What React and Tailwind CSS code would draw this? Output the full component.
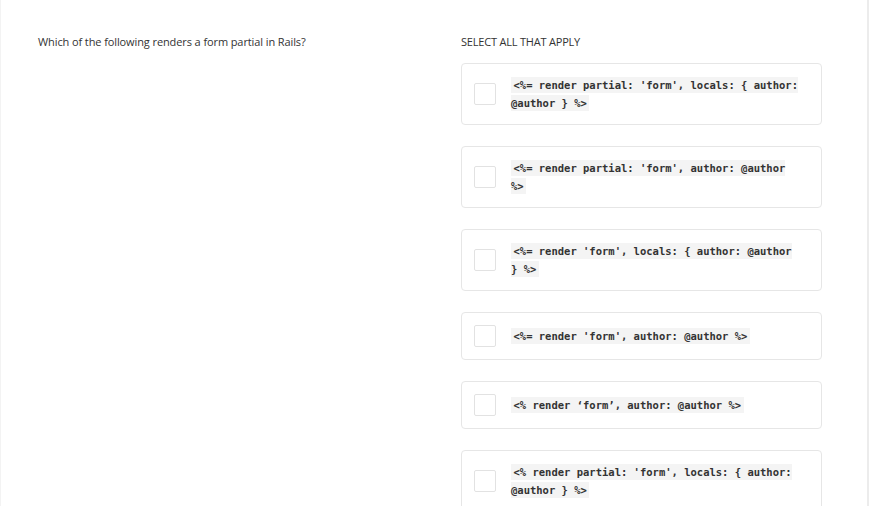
import React from 'react'

const options = [
  "<%= render partial: 'form', locals: { author: @author } %>",
  "<%= render partial: 'form', author: @author %>",
  "<%= render 'form', locals: { author: @author } %>",
  "<%= render 'form', author: @author %>",
  "<% render \u2018form\u2019, author: @author %>",
  "<% render partial: 'form', locals: { author: @author } %>",
]

const mono = { fontFamily: '"DejaVu Sans Mono", monospace' }

function Option({ code }) {
  return (
    <label className="flex items-center gap-[15px] rounded-[4px] border border-[#e6e6e6] bg-white px-[12px] py-[12px]">
      <span className="h-[22px] w-[22px] shrink-0 rounded-[2px] border border-[#e2e2e2] bg-white" />
      <span className="mr-[10px] flex-1 text-[10.5px] leading-[18px] text-[#333]" style={mono}>
        <code className="bg-[#f4f4f4] px-[2.5px] py-[2px] text-[10.5px] font-semibold" style={mono}>{code}</code>
      </span>
    </label>
  )
}

export default function App() {
  return (
    <div className="flex h-[506px] w-[869px] overflow-hidden border-l border-r-2 border-l-[#f3f3f3] border-r-[#ececec] bg-white" style={{ fontFamily: '"Open Sans", sans-serif' }}>
      <div className="flex-1 pl-[37px] pt-[34px]">
        <p className="text-[11px] leading-[15px] tracking-[-0.1px] text-[#333]">
          Which of the following renders a form partial in Rails?
        </p>
      </div>
      <div className="mr-[45px] w-[361px] pt-[34px]">
        <p className="mb-[14px] text-[11px] leading-[15px] tracking-[-0.2px] text-[#333] uppercase">
          Select all that apply
        </p>
        <div className="flex flex-col gap-[21px]">
          {options.map((c, i) => (
            <Option key={i} code={c} />
          ))}
        </div>
      </div>
    </div>
  )
}
